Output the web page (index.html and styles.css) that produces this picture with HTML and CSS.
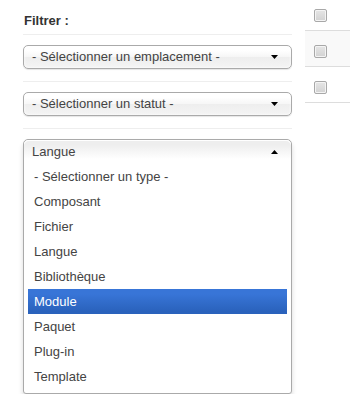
FILE: index.html
```html
<!DOCTYPE html>
<html lang="fr">
<head>
    <meta charset="UTF-8">
    <title>Filtrer</title>
    <link rel="stylesheet" href="styles.css">
</head>
<body>

<div class="page">
    <!-- Barre latérale des filtres -->
    <div class="sidebar">
        <h4 class="filter-title">Filtrer :</h4>

        <div class="filter-group">
            <div class="chzn-single">
                <span>- Sélectionner un emplacement -</span>
                <svg class="caret" width="7" height="4" viewBox="0 0 7 4"><polygon points="0,0 7,0 3.5,4" fill="#000"/></svg>
            </div>
        </div>

        <div class="filter-group">
            <div class="chzn-single">
                <span>- Sélectionner un statut -</span>
                <svg class="caret" width="7" height="4" viewBox="0 0 7 4"><polygon points="0,0 7,0 3.5,4" fill="#000"/></svg>
            </div>
        </div>

        <!-- Liste ouverte -->
        <div class="chzn-open">
            <div class="chzn-single open">
                <span>Langue</span>
                <svg class="caret" width="7" height="4" viewBox="0 0 7 4"><polygon points="0,4 7,4 3.5,0" fill="#000"/></svg>
            </div>
            <ul class="chzn-results">
                <li>- Sélectionner un type -</li>
                <li>Composant</li>
                <li>Fichier</li>
                <li>Langue</li>
                <li>Bibliothèque</li>
                <li class="highlighted">Module</li>
                <li>Paquet</li>
                <li>Plug-in</li>
                <li>Template</li>
            </ul>
        </div>
    </div>

    <!-- Début du tableau -->
    <div class="table">
        <div class="row"><span class="checkbox"></span></div>
        <div class="row striped"><span class="checkbox"></span></div>
        <div class="row"><span class="checkbox"></span></div>
    </div>
</div>

</body>
</html>
```

FILE: styles.css
```css
* {
    margin: 0;
    padding: 0;
    box-sizing: border-box;
}

body {
    font-family: 'Liberation Sans', Arial, sans-serif;
    font-size: 13px;
    color: #333;
    background: #fff;
}

.page {
    display: flex;
    align-items: flex-start;
}

/* Filtres */
.sidebar {
    width: 269px;
    margin-left: 23px;
}

.filter-title {
    font-size: 13px;
    font-weight: bold;
    line-height: 18px;
    padding: 12px 0 4px 1px;
    border-bottom: 1px solid #eee;
}

.filter-group {
    padding: 10px 0 12px;
    border-bottom: 1px solid #eee;
}

.chzn-single {
    display: flex;
    align-items: center;
    justify-content: space-between;
    height: 24px;
    padding: 0 13px 0 8px;
    border: 1px solid #aaa;
    border-radius: 5px;
    background: linear-gradient(#fff 20%, #f6f6f6 50%, #eee 52%, #f4f4f4 100%);
    box-shadow: 0 0 3px #fff inset, 0 1px 1px rgba(0, 0, 0, 0.1);
    color: #444;
    line-height: 22px;
}

.caret {
    display: block;
}

.chzn-open {
    margin-top: 10px;
    border: 1px solid #aaa;
    border-radius: 5px 5px 3px 3px;
    box-shadow: 0 4px 5px rgba(0, 0, 0, 0.15);
    background: #fff;
}

.chzn-single.open {
    height: 24px;
    border: none;
    border-radius: 5px 5px 0 0;
    background: linear-gradient(#eee 20%, #fff 80%);
    box-shadow: 0 1px 0 #fff inset;
}

.chzn-results {
    list-style: none;
    margin: 0 4px 4px 0;
    padding-left: 4px;
    color: #444;
}

.chzn-results li {
    padding: 5px 6px;
    line-height: 15px;
}

.chzn-results li.highlighted {
    background: linear-gradient(#3875d7 20%, #2a62bc 90%);
    color: #fff;
}

/* Tableau */
.table {
    flex: 1;
    margin-left: 13px;
    margin-top: -5px;
}

.row {
    height: 36px;
    padding: 14px 0 0 9px;
    border-bottom: 1px solid #ddd;
}

.row.striped {
    background: #f9f9f9;
}

.checkbox {
    display: block;
    width: 13px;
    height: 13px;
    border: 1px solid #a8a8a8;
    border-radius: 2px;
    background: linear-gradient(#e6e6e6, #d2d2d2);
    box-shadow: 0 0 0 1px #f4f4f4 inset;
}
```
